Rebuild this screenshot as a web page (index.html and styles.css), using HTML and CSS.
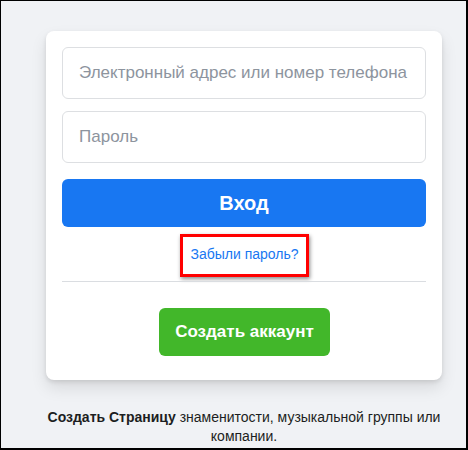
FILE: index.html
```html
<!DOCTYPE html>
<html lang="ru">
<head>
<meta charset="utf-8">
<link rel="stylesheet" href="styles.css">
</head>
<body>
<div class="frame">
  <div class="wrap">
    <div class="card">
      <div class="field">Электронный адрес или номер телефона</div>
      <div class="field">Пароль</div>
      <div class="login">Вход</div>
      <div class="forgot-row"><span class="highlight"><span class="forgot">Забыли пароль?</span></span></div>
      <div class="divider"></div>
      <div class="create-row"><span class="create">Создать аккаунт</span></div>
    </div>
    <p class="page-note"><b>Создать Страницу</b> знаменитости, музыкальной группы или компании.</p>
  </div>
</div>
</body>
</html>
```
FILE: styles.css
```css
html, body { margin: 0; padding: 0; }
body {
  font-family: "Liberation Sans", Arial, sans-serif;
  background: #f0f2f5;
}
.frame {
  box-sizing: border-box;
  width: 468px;
  height: 450px;
  border-top: 1px solid #000;
  border-left: 1px solid #000;
  border-right: 2px solid #000;
  border-bottom: 2px solid #000;
  background: #f0f2f5;
  padding: 30px 0 0 45px;
  overflow: hidden;
}
.wrap { width: 396px; }
.card {
  box-sizing: border-box;
  background: #fff;
  border-radius: 8px;
  box-shadow: 0 2px 4px rgba(0,0,0,.1), 0 8px 16px rgba(0,0,0,.1);
  padding: 16px 16px 24px;
  display: flex;
  flex-direction: column;
  height: 349px;
}
.field {
  box-sizing: border-box;
  height: 52px;
  border: 1px solid #dddfe2;
  border-radius: 6px;
  padding: 0 16px;
  display: flex;
  align-items: center;
  font-size: 17px;
  color: #8d949e;
}
.field + .field { margin-top: 12px; }
.login {
  margin-top: 16px;
  height: 48px;
  border-radius: 6px;
  background: #1877f2;
  color: #fff;
  font-size: 20px;
  font-weight: bold;
  display: flex;
  align-items: center;
  justify-content: center;
}
.forgot-row {
  margin-top: 7px;
  display: flex;
  justify-content: center;
}
.highlight {
  box-sizing: border-box;
  height: 43px;
  width: 129px;
  border: 3px solid #ff0000;
  box-shadow: 1px 2px 4px rgba(0,0,0,.45);
  display: flex;
  align-items: center;
  justify-content: center;
  margin-left: 1px;
}
.forgot {
  font-size: 14px;
  color: #1877f2;
  position: relative;
  top: -2px;
}
.divider {
  margin-top: 4px;
  border-bottom: 1px solid #dadde1;
}
.create-row {
  margin-top: 26px;
  display: flex;
  justify-content: center;
}
.create {
  box-sizing: border-box;
  height: 48px;
  padding: 0 16px;
  width: 171px;
  border-radius: 6px;
  background: #42b72a;
  color: #fff;
  font-size: 17px;
  font-weight: bold;
  display: flex;
  align-items: center;
  justify-content: center;
  margin-left: 1px;
}
.page-note {
  margin: 28px 0 0;
  text-align: center;
  font-size: 14px;
  line-height: 19px;
  color: #1c1e21;
}
.page-note b { font-weight: bold; }
```
